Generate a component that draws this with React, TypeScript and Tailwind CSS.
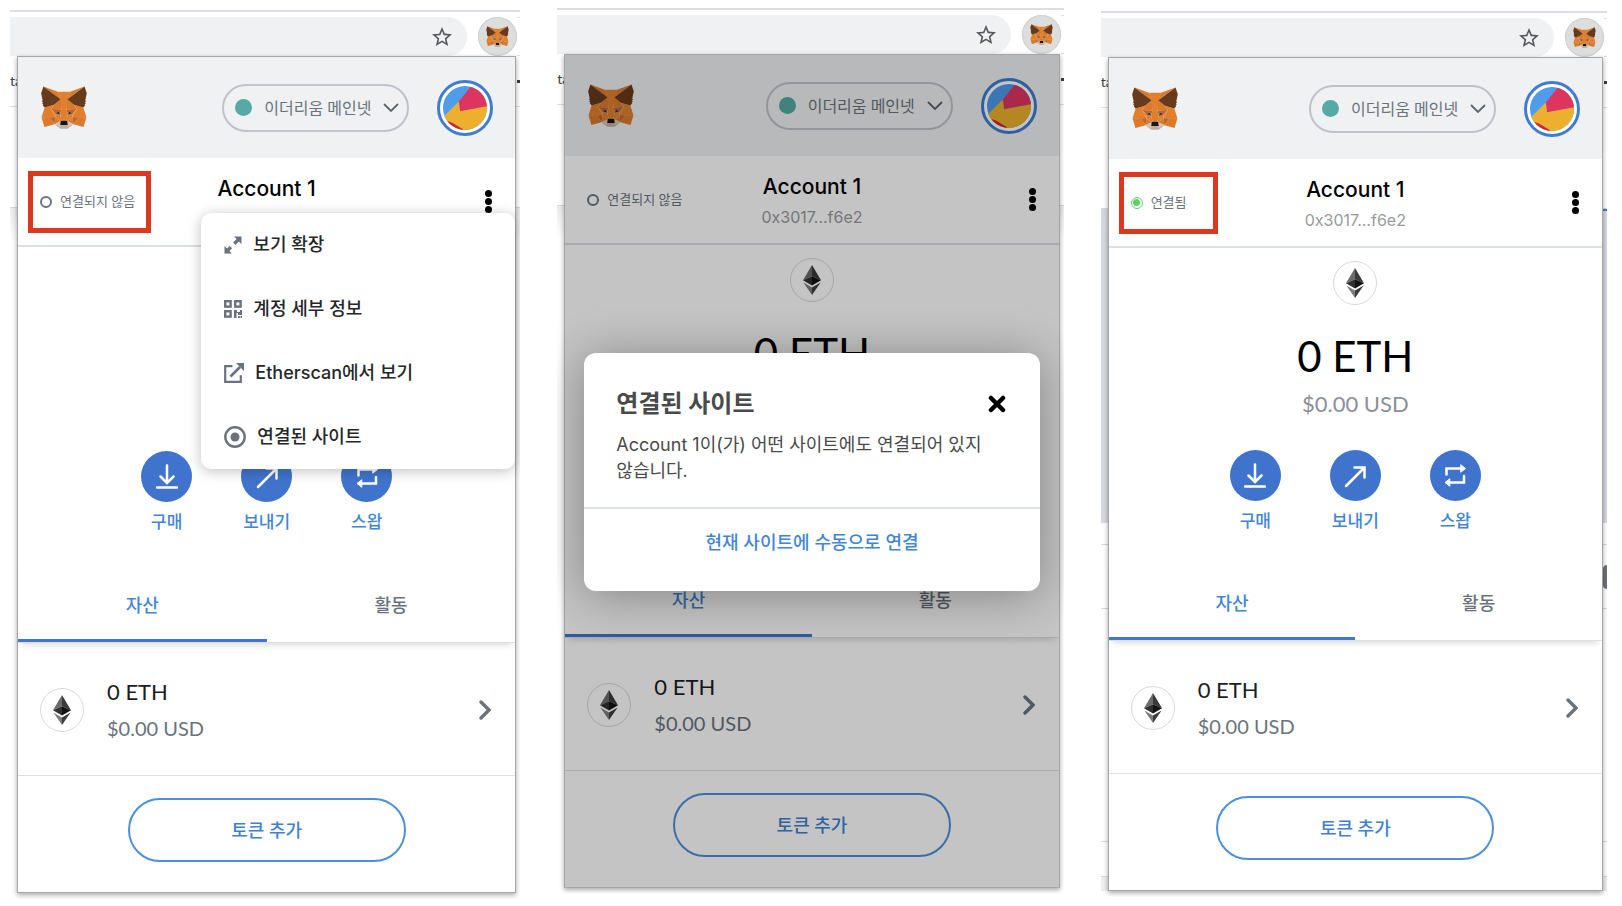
import React from 'react';
import clsx from 'clsx';
import { MdStarBorder } from 'react-icons/md';

type Overlay = 'menu' | 'modal' | 'none';

interface WalletProps {
  overlay: Overlay;
  connected?: boolean;
  highlighted?: boolean;
}

function Fox({ className }: { className?: string }) {
  return (
    <svg viewBox="31 34 257 239" className={className} aria-hidden="true">
      <g fill="#db7a2b">
        <polygon points="274.1,35.5 174.6,109.4 193,65.8" />
        <polygon points="44.4,35.5 143.1,110.1 125.6,65.8" />
        <polygon points="238.3,206.8 211.8,247.4 268.5,263 284.8,207.7" />
        <polygon points="33.9,207.7 50.1,263 106.8,247.4 80.3,206.8" />
        <polygon points="103.6,138.2 87.8,162.1 144.1,164.6 142.1,104.1" />
        <polygon points="214.9,138.2 175.9,103.4 174.6,164.6 230.8,162.1" />
        <polygon points="106.8,247.4 140.6,230.9 111.4,208.1" />
        <polygon points="177.9,230.9 211.8,247.4 207.1,208.1" />
      </g>
      <g fill="#d7c1b3">
        <polygon points="211.8,247.4 177.9,230.9 180.6,253 180.3,262.3" />
        <polygon points="106.8,247.4 138.3,262.3 138.1,253 140.6,230.9" />
      </g>
      <g fill="#c1632a">
        <polygon points="106.8,247.4 111.6,206.8 80.3,207.7" />
        <polygon points="207,206.8 211.8,247.4 238.3,207.7" />
        <polygon points="230.8,162.1 174.6,164.6 179.8,193.5 188.1,176.1 208.1,185.2" />
        <polygon points="110.6,185.2 130.6,176.1 138.8,193.5 144.1,164.6 87.8,162.1" />
      </g>
      <g fill="#e17f2d">
        <polygon points="87.8,162.1 111.4,208.1 110.6,185.2" />
        <polygon points="208.1,185.2 207.1,208.1 230.8,162.1" />
        <polygon points="179.8,193.5 173.1,227.6 177.9,230.9 207.1,208.1 208.1,185.2" />
        <polygon points="110.6,185.2 111.4,208.1 140.6,230.9 145.4,227.6 138.8,193.5" />
        <polygon points="267.2,153.5 214.9,138.2 230.8,162.1 207.1,208.1 238.3,207.7 284.8,207.7" />
        <polygon points="103.6,138.2 51.3,153.5 33.9,207.7 80.3,207.7 111.4,208.1 87.8,162.1" />
        <polygon points="174.6,164.6 177.9,106.9 193.1,65.8 125.6,65.8 140.6,106.9 144.1,164.6 138.8,193.5 145.4,227.6 173.1,227.6 179.8,193.5" />
      </g>
      <g fill="#2b3440">
        <polygon points="138.8,193.5 110.6,185.2 130.5,176.1" />
        <polygon points="179.7,193.5 188,176.1 208,185.2" />
      </g>
      <polygon
        fill="#c0ad9e"
        points="180.3,262.3 180.6,253 178.1,250.8 140.4,250.8 138.1,253 138.3,262.3 106.8,247.4 117.8,256.4 140.1,271.9 178.4,271.9 200.8,256.4 211.8,247.4"
      />
      <polygon
        fill="#161616"
        points="177.9,230.9 173.1,227.6 145.4,227.6 140.6,230.9 138.1,253 140.4,250.8 178.1,250.8 180.6,253"
      />
      <g fill="#683a1c">
        <polygon points="278.3,114.2 286.8,73.4 274.1,35.5 177.9,106.9 214.9,138.2 267.2,153.5 278.8,140 273.8,136.4 281.8,129.1 275.6,124.3 283.6,118.2" />
        <polygon points="31.8,73.4 40.3,114.2 34.9,118.2 42.9,124.3 36.8,129.1 44.8,136.4 39.8,140 51.3,153.5 103.6,138.2 140.6,106.9 44.4,35.5" />
      </g>
    </svg>
  );
}

function EthCoin() {
  return (
    <span className="flex size-11 shrink-0 items-center justify-center rounded-full border border-[#d6d9dc]">
      <svg viewBox="0 0 18 30" className="h-[30px] w-[18px]" aria-hidden="true">
        <polygon points="9,0 0,15.2 9,11.2" fill="#6b6b6b" />
        <polygon points="9,0 18,15.2 9,11.2" fill="#3a3a3a" />
        <polygon points="0,15.2 9,11.2 9,20.4" fill="#303030" />
        <polygon points="18,15.2 9,11.2 9,20.4" fill="#121212" />
        <polygon points="0.4,17.4 9,22.4 9,30" fill="#7d7d7d" />
        <polygon points="17.6,17.4 9,22.4 9,30" fill="#3c3c3c" />
      </svg>
    </span>
  );
}

function Jazzicon() {
  return (
    <svg viewBox="0 0 134 134" className="size-11 rounded-full" aria-hidden="true">
      <rect width="134" height="134" fill="#4f9bec" />
      <polygon points="86,0 134,0 134,64 52,77 48,47" fill="#de3560" />
      <polygon points="0,95 48,47 52,77 134,62 134,134 0,134" fill="#ecb02e" />
      <polygon points="12,106 28,112 60,131 60,134 0,134" fill="#d0213f" />
    </svg>
  );
}

const ACTIONS = [
  {
    label: '구매',
    icon: (
      <>
        <path d="M11 2.5v17M4.5 13.5l6.5 6.5 6.5-6.5" />
        <path d="M1 24.5h20" />
      </>
    ),
  },
  {
    label: '보내기',
    icon: <path d="M2 24L20 6M10.5 5.5h10v10" />,
  },
  {
    label: '스왑',
    icon: (
      <>
        <path d="M2.5 12.5v-6H18M20 14v6.5H5" />
        <path d="M17 3l4.5 3.5L17 10zM5.5 17L1 20.5 5.5 24z" fill="currentColor" strokeWidth="1" />
      </>
    ),
  },
];

const MENU_ITEMS = [
  {
    label: '보기 확장',
    icon: (
      <svg viewBox="0 0 18 18" className="size-[18px]" aria-hidden="true">
        <path
          d="M10 .5h7.5V8l-2.6-2.6-3.5 3.5-2.3-2.3 3.5-3.5zM8 17.5H.5V10l2.6 2.6 2.7-2.7 2.3 2.3-2.7 2.7z"
          fill="#6a737d"
        />
      </svg>
    ),
  },
  {
    label: '계정 세부 정보',
    icon: (
      <svg viewBox="0 0 18 18" className="size-[18px]" aria-hidden="true">
        <g fill="none" stroke="#6a737d" strokeWidth="2.4">
          <rect x="1.2" y="1.2" width="5.4" height="5.4" />
          <rect x="11.2" y="1.2" width="5.4" height="5.4" />
          <rect x="1.2" y="11.2" width="5.4" height="5.4" />
        </g>
        <path d="M10 10h3v2h3v-2h2v5h-4v-2h-1.5v5H10zM14 16h1.8v2H14zM16.5 16H18v2h-1.5z" fill="#6a737d" />
      </svg>
    ),
  },
  {
    label: 'Etherscan에서 보기',
    icon: (
      <svg viewBox="0 0 20 20" className="size-5" aria-hidden="true">
        <path d="M8.5 3.2H1.2v15.6h15.6v-6.6" fill="none" stroke="#6a737d" strokeWidth="2.2" />
        <path d="M6.5 13.5L16 4" stroke="#6a737d" strokeWidth="2.6" />
        <path d="M12 0h8v8z" fill="#6a737d" />
      </svg>
    ),
  },
  {
    label: '연결된 사이트',
    icon: (
      <svg viewBox="0 0 22 22" className="size-[22px]" aria-hidden="true">
        <circle cx="11" cy="11" r="9.7" fill="none" stroke="#6a737d" strokeWidth="2.4" />
        <circle cx="11" cy="11" r="4.5" fill="#6a737d" />
      </svg>
    ),
  },
];

function AccountMenu() {
  return (
    <div className="absolute top-[156px] right-0 w-[314px] rounded-[10px] bg-white font-['Inter','Noto_Sans_CJK_KR',sans-serif] shadow-[0_2px_14px_rgba(0,0,0,0.25)]">
      {MENU_ITEMS.map((item) => (
        <button
          key={item.label}
          className="flex h-16 w-full items-center gap-[11px] pl-[23px] text-lg font-medium text-[#24272a]"
        >
          {item.icon}
          {item.label}
        </button>
      ))}
    </div>
  );
}

function ConnectedSitesModal() {
  return (
    <div className="absolute inset-0 flex items-start justify-center bg-black/23 px-[19px] pt-[298px] font-['Inter','Noto_Sans_CJK_KR',sans-serif]">
      <div
        role="dialog"
        aria-label="연결된 사이트"
        className="w-full rounded-xl bg-white shadow-[0_4px_48px_rgba(0,0,0,0.33)]"
      >
        <div className="h-[156px] border-b-2 border-[#dfe3e9] px-8 pt-[31px]">
          <div className="flex items-center justify-between">
            <h2 className="text-2xl leading-10 font-bold text-[#4a4a4a]">연결된 사이트</h2>
            <button aria-label="닫기" className="pr-0.5">
              <svg viewBox="0 0 18 18" className="size-[18px]" aria-hidden="true">
                <path d="M3 3l12 12M15 3L3 15" stroke="#000" strokeWidth="4.5" strokeLinecap="round" />
              </svg>
            </button>
          </div>
          <p className="mt-2 text-lg leading-[26px] break-keep text-[#4a4a4a]">
            Account 1이(가) 어떤 사이트에도 연결되어 있지 않습니다.
          </p>
        </div>
        <div className="flex h-[82px] items-start justify-center pt-5">
          <a href="#connect" className="text-lg leading-7 font-medium text-[#3f86d6]">
            현재 사이트에 수동으로 연결
          </a>
        </div>
      </div>
    </div>
  );
}

function Popup({ overlay, connected, highlighted }: WalletProps) {
  const menuOpen = overlay === 'menu';

  return (
    <section className="relative col-start-1 row-start-1 mr-1 ml-[7px] self-start border border-[#a6a6a6] bg-white shadow-[0_2px_5px_rgba(0,0,0,0.35)]">
      <header className="flex h-[101px] items-center bg-[#eff1f3] pr-[22px] pl-[23px]">
        <Fox className="h-[43px] w-[46px]" />
        <button className="ml-auto flex h-12 w-[187px] items-center rounded-full border-2 border-[#bfc2c9] pl-[11px] text-base text-[#6a737d]">
          <span className="mr-3 size-[17px] rounded-full bg-[#56aaa5]" />
          이더리움 메인넷
          <svg viewBox="0 0 16 10" className="ml-3 h-2.5 w-4" aria-hidden="true">
            <path d="M1.5 1.5L8 8l6.5-6.5" fill="none" stroke="#5c646d" strokeWidth="1.8" strokeLinecap="round" />
          </svg>
        </button>
        <button
          aria-label="계정"
          className="ml-7 flex size-14 items-center justify-center rounded-full border-[3px] border-[#3d7dd2] bg-white"
        >
          <Jazzicon />
        </button>
      </header>

      <div className="grid h-[89px] grid-cols-[1fr_auto_1fr] items-center border-b-2 border-[#dcdfe3]">
        <button
          className={clsx(
            'ml-2.5 flex h-[62px] items-center gap-2 border-[5px] pl-[7px] text-[13px] text-[#6a737d]',
            highlighted ? 'border-[#dc3820]' : 'border-transparent',
            connected ? 'w-[99px]' : 'w-[123px]'
          )}
        >
          {connected ? (
            <span className="flex size-3 items-center justify-center rounded-full border border-[#5fd068]">
              <span className="size-[7px] rounded-full bg-[#5fd068]" />
            </span>
          ) : (
            <span className="size-3 rounded-full border-2 border-[#6a737d]" />
          )}
          {connected ? '연결됨' : '연결되지 않음'}
        </button>
        <div className="pt-0.5 text-center font-['Inter',sans-serif]">
          <p className="text-[21px] leading-8 font-medium text-black">Account 1</p>
          <p className={clsx('text-base leading-7 text-[#989a9d]', menuOpen && 'invisible')}>0x3017...f6e2</p>
        </div>
        <button aria-label="계정 옵션" className="mr-[23px] flex flex-col gap-px justify-self-end">
          <span className="size-[7px] rounded-full bg-black" />
          <span className="size-[7px] rounded-full bg-black" />
          <span className="size-[7px] rounded-full bg-black" />
        </button>
      </div>

      <div className={clsx('flex flex-col items-center', menuOpen ? 'pt-[15px] pb-7' : 'pt-[13px] pb-[27px]')}>
        <EthCoin />
        {/* the open menu covers the balance */}
        <div className={clsx('mt-[23px] text-center', menuOpen && 'invisible')}>
          <p className="text-[42px] leading-14 text-black">0 ETH</p>
          <p className="mt-1.5 text-[22px] leading-7 text-[#8a9099]">$0.00 USD</p>
        </div>
        <div className="mt-8 flex">
          {ACTIONS.map((action) => (
            <button key={action.label} className="flex w-[100px] flex-col items-center gap-2 font-medium text-[#3f86d6]">
              <span className="flex size-[51px] items-center justify-center rounded-full bg-[#4074cc] text-white">
                <svg
                  viewBox="0 0 22 28"
                  className="h-7 w-[22px]"
                  fill="none"
                  stroke="currentColor"
                  strokeWidth="2.5"
                  strokeLinecap="round"
                  aria-hidden="true"
                >
                  {action.icon}
                </svg>
              </span>
              <span className="text-[17px] leading-6">{action.label}</span>
            </button>
          ))}
        </div>
      </div>

      <div
        role="tablist"
        className="flex h-[81px] border-b border-[#dcdfe3] text-lg font-medium shadow-[0_6px_6px_-4px_rgba(0,0,0,0.15)]"
      >
        <button role="tab" aria-selected="true" className="flex-1 border-b-[3px] border-[#3f77cf] pt-2 text-[#3f86d6]">
          자산
        </button>
        <button role="tab" aria-selected="false" className="flex-1 border-b-[3px] border-transparent pt-2 text-[#6a737d]">
          활동
        </button>
      </div>

      <button className="flex h-[133px] w-full items-center border-b border-[#dcdfe3] pt-0.5 pr-6 pl-[22px] text-left">
        <EthCoin />
        <span className="ml-[23px] flex flex-col">
          <span className="text-[22px] leading-9 text-[#1b1d1f]">0 ETH</span>
          <span className="text-xl leading-9 text-[#6a737d]">$0.00 USD</span>
        </span>
        <svg viewBox="0 0 12 20" className="ml-auto h-5 w-3" aria-hidden="true">
          <path d="M2 2l8 8-8 8" fill="none" stroke="#6a737d" strokeWidth="3.4" strokeLinecap="round" />
        </svg>
      </button>

      <div className="flex justify-center pt-[22px] pb-[30px]">
        <button className="h-16 w-[278px] rounded-full border-2 border-[#4a90dc] text-lg font-medium text-[#3f80d2]">
          토큰 추가
        </button>
      </div>

      {menuOpen && <AccountMenu />}
      {overlay === 'modal' && <ConnectedSitesModal />}
    </section>
  );
}

// The slivers of the web page that show round the popup
function PageBehind({ loaded }: { loaded: boolean }) {
  return (
    <div className="col-start-1 row-start-1 flex flex-col">
      <div className="flex h-[51px] items-center justify-between border-b border-[#dcdee1] text-sm text-[#3c4043]">
        <span>ta</span>
        <span className="size-[3px] bg-[#3c4043]" />
      </div>
      <div className="h-[101px] border-b border-[#d5d7da]" />
      {loaded ? (
        <>
          <div className="flex h-[314px] justify-end bg-[#d6dae0]">
            <span className="h-0.5 w-1 bg-[#3f77cf]" />
          </div>
          <div className="h-[22px] border-b border-[#d5d7da]" />
          <div className="flex h-16 items-center justify-end border-b border-[#d5d7da]">
            <span className="h-6 w-1 rounded-l-full bg-[#6a737d]" />
          </div>
          <div className="h-[233px] border-b border-[#d5d7da]" />
          <div className="h-[35px] border-b border-[#d5d7da]" />
          <div className="flex-1 bg-[#efefef]" />
        </>
      ) : (
        <div className="flex-1 bg-gradient-to-b from-[#ececec] to-white to-5%" />
      )}
    </div>
  );
}

function BrowserShot(props: WalletProps) {
  return (
    <article className="overflow-hidden border-t-2 border-[#dcdde9]">
      <div className="flex h-11 items-end">
        <div className="flex h-[39px] flex-1 items-center justify-end rounded-r-full bg-[#eff1f3] pr-[13px]">
          <MdStarBorder className="size-6 text-[#55585c]" />
        </div>
        <span className="ml-[11px] flex size-[39px] items-center justify-center rounded-full bg-[#dcdedd] ring-1 ring-[#d0d0d0] ring-inset">
          <Fox className="h-[21px] w-[23px]" />
        </span>
        <span className="h-[39px] w-[3px] border-y border-[#dcdee1]" />
      </div>
      <div className="grid pb-1.5">
        <PageBehind loaded={!!props.connected} />
        <Popup {...props} />
      </div>
    </article>
  );
}

export default function App() {
  return (
    <main className="grid grid-cols-[510fr_506fr_506fr] items-start gap-[37px] bg-white pr-[15px] pl-2.5 font-['Lato','Noto_Sans_CJK_KR',sans-serif]">
      <div className="pt-2.5">
        <BrowserShot overlay="menu" highlighted />
      </div>
      <div className="pt-2">
        <BrowserShot overlay="modal" />
      </div>
      <div className="pt-[11px]">
        <BrowserShot overlay="none" connected highlighted />
      </div>
    </main>
  );
}
